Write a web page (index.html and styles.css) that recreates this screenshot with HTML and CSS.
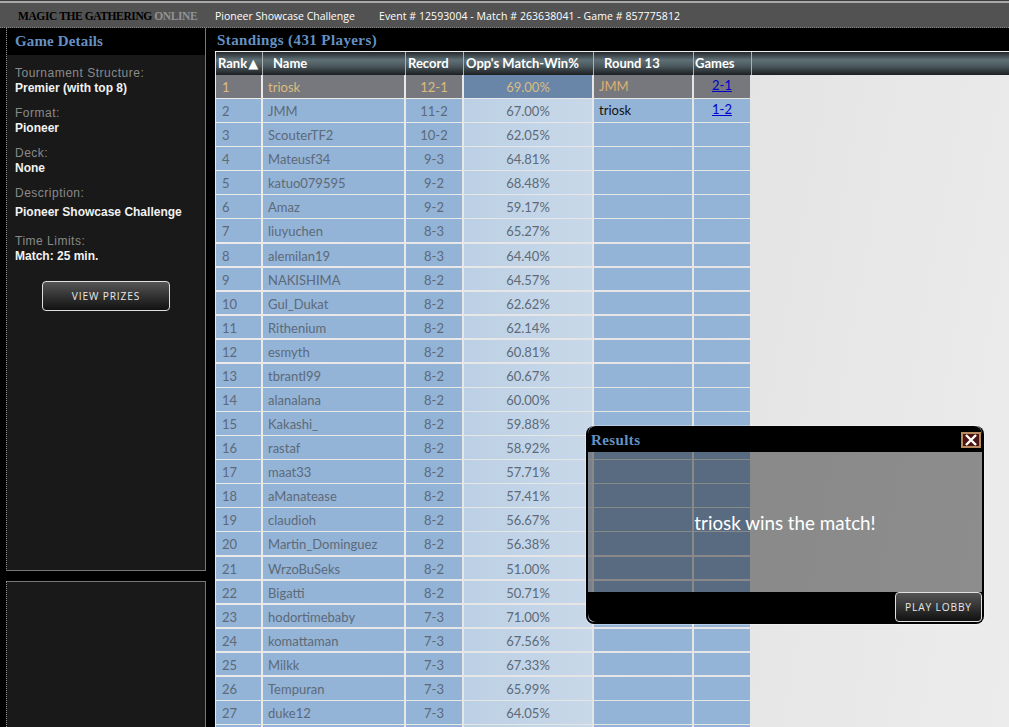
FILE: index.html
```html
<!DOCTYPE html>
<html>
<head>
<meta charset="utf-8">
<title>Pioneer Showcase Challenge</title>
<link rel="stylesheet" href="styles.css">
</head>
<body>
<div class="topbar">
  <div class="logo">MAGIC THE GATHERING <span class="logo-online">ONLINE</span></div>
  <div class="event-name">Pioneer Showcase Challenge</div>
  <div class="event-info">Event # 12593004 - Match # 263638041 - Game # 857775812</div>
</div>
<div class="main">
  <div class="sidebar">
    <div class="panel details">
      <h2 class="panel-title">Game Details</h2>
      <div class="detail"><div class="label">Tournament Structure:</div><div class="value">Premier (with top 8)</div></div>
      <div class="detail"><div class="label">Format:</div><div class="value">Pioneer</div></div>
      <div class="detail"><div class="label">Deck:</div><div class="value">None</div></div>
      <div class="detail detail-desc"><div class="label desc">Description:</div><div class="value">Pioneer Showcase Challenge</div></div>
      <div class="detail"><div class="label">Time Limits:</div><div class="value">Match: 25 min.</div></div>
      <button class="btn prizes">VIEW PRIZES</button>
    </div>
    <div class="panel chat"></div>
  </div>
  <div class="content">
    <h2 class="standings-title">Standings (431 Players)</h2>
    <div class="table-head">
      <div class="th c-rank">Rank<span class="arrow">▲</span></div>
      <div class="th c-name">Name</div>
      <div class="th c-rec">Record</div>
      <div class="th c-opp">Opp's Match-Win%</div>
      <div class="th c-round">Round 13</div>
      <div class="th c-games">Games</div>
    </div>
    <div class="rows" id="rows">
      <div class="row me"><div class="c-rank">1</div><div class="c-name">triosk</div><div class="c-rec">12-1</div><div class="c-opp">69.00%</div><div class="c-round">JMM</div><div class="c-games"><a href="#">2-1</a></div></div>
      <div class="row"><div class="c-rank">2</div><div class="c-name">JMM</div><div class="c-rec">11-2</div><div class="c-opp">67.00%</div><div class="c-round">triosk</div><div class="c-games"><a href="#">1-2</a></div></div>
      <div class="row"><div class="c-rank">3</div><div class="c-name">ScouterTF2</div><div class="c-rec">10-2</div><div class="c-opp">62.05%</div><div class="c-round"></div><div class="c-games"></div></div>
      <div class="row"><div class="c-rank">4</div><div class="c-name">Mateusf34</div><div class="c-rec">9-3</div><div class="c-opp">64.81%</div><div class="c-round"></div><div class="c-games"></div></div>
      <div class="row"><div class="c-rank">5</div><div class="c-name">katuo079595</div><div class="c-rec">9-2</div><div class="c-opp">68.48%</div><div class="c-round"></div><div class="c-games"></div></div>
      <div class="row"><div class="c-rank">6</div><div class="c-name">Amaz</div><div class="c-rec">9-2</div><div class="c-opp">59.17%</div><div class="c-round"></div><div class="c-games"></div></div>
      <div class="row"><div class="c-rank">7</div><div class="c-name">liuyuchen</div><div class="c-rec">8-3</div><div class="c-opp">65.27%</div><div class="c-round"></div><div class="c-games"></div></div>
      <div class="row"><div class="c-rank">8</div><div class="c-name">alemilan19</div><div class="c-rec">8-3</div><div class="c-opp">64.40%</div><div class="c-round"></div><div class="c-games"></div></div>
      <div class="row"><div class="c-rank">9</div><div class="c-name">NAKISHIMA</div><div class="c-rec">8-2</div><div class="c-opp">64.57%</div><div class="c-round"></div><div class="c-games"></div></div>
      <div class="row"><div class="c-rank">10</div><div class="c-name">Gul_Dukat</div><div class="c-rec">8-2</div><div class="c-opp">62.62%</div><div class="c-round"></div><div class="c-games"></div></div>
      <div class="row"><div class="c-rank">11</div><div class="c-name">Rithenium</div><div class="c-rec">8-2</div><div class="c-opp">62.14%</div><div class="c-round"></div><div class="c-games"></div></div>
      <div class="row"><div class="c-rank">12</div><div class="c-name">esmyth</div><div class="c-rec">8-2</div><div class="c-opp">60.81%</div><div class="c-round"></div><div class="c-games"></div></div>
      <div class="row"><div class="c-rank">13</div><div class="c-name">tbrantl99</div><div class="c-rec">8-2</div><div class="c-opp">60.67%</div><div class="c-round"></div><div class="c-games"></div></div>
      <div class="row"><div class="c-rank">14</div><div class="c-name">alanalana</div><div class="c-rec">8-2</div><div class="c-opp">60.00%</div><div class="c-round"></div><div class="c-games"></div></div>
      <div class="row"><div class="c-rank">15</div><div class="c-name">Kakashi_</div><div class="c-rec">8-2</div><div class="c-opp">59.88%</div><div class="c-round"></div><div class="c-games"></div></div>
      <div class="row"><div class="c-rank">16</div><div class="c-name">rastaf</div><div class="c-rec">8-2</div><div class="c-opp">58.92%</div><div class="c-round"></div><div class="c-games"></div></div>
      <div class="row"><div class="c-rank">17</div><div class="c-name">maat33</div><div class="c-rec">8-2</div><div class="c-opp">57.71%</div><div class="c-round"></div><div class="c-games"></div></div>
      <div class="row"><div class="c-rank">18</div><div class="c-name">aManatease</div><div class="c-rec">8-2</div><div class="c-opp">57.41%</div><div class="c-round"></div><div class="c-games"></div></div>
      <div class="row"><div class="c-rank">19</div><div class="c-name">claudioh</div><div class="c-rec">8-2</div><div class="c-opp">56.67%</div><div class="c-round"></div><div class="c-games"></div></div>
      <div class="row"><div class="c-rank">20</div><div class="c-name">Martin_Dominguez</div><div class="c-rec">8-2</div><div class="c-opp">56.38%</div><div class="c-round"></div><div class="c-games"></div></div>
      <div class="row"><div class="c-rank">21</div><div class="c-name">WrzoBuSeks</div><div class="c-rec">8-2</div><div class="c-opp">51.00%</div><div class="c-round"></div><div class="c-games"></div></div>
      <div class="row"><div class="c-rank">22</div><div class="c-name">Bigatti</div><div class="c-rec">8-2</div><div class="c-opp">50.71%</div><div class="c-round"></div><div class="c-games"></div></div>
      <div class="row"><div class="c-rank">23</div><div class="c-name">hodortimebaby</div><div class="c-rec">7-3</div><div class="c-opp">71.00%</div><div class="c-round"></div><div class="c-games"></div></div>
      <div class="row"><div class="c-rank">24</div><div class="c-name">komattaman</div><div class="c-rec">7-3</div><div class="c-opp">67.56%</div><div class="c-round"></div><div class="c-games"></div></div>
      <div class="row"><div class="c-rank">25</div><div class="c-name">Milkk</div><div class="c-rec">7-3</div><div class="c-opp">67.33%</div><div class="c-round"></div><div class="c-games"></div></div>
      <div class="row"><div class="c-rank">26</div><div class="c-name">Tempuran</div><div class="c-rec">7-3</div><div class="c-opp">65.99%</div><div class="c-round"></div><div class="c-games"></div></div>
      <div class="row"><div class="c-rank">27</div><div class="c-name">duke12</div><div class="c-rec">7-3</div><div class="c-opp">64.05%</div><div class="c-round"></div><div class="c-games"></div></div>
      <div class="row"><div class="c-rank"></div><div class="c-name"></div><div class="c-rec"></div><div class="c-opp"></div><div class="c-round"></div><div class="c-games"></div></div>
    </div>
  </div>
</div>

<div class="dialog">
  <div class="dialog-head">
    <span class="dialog-title">Results</span>
    <span class="dialog-close"><svg width="14" height="12" viewBox="0 0 14 12"><path d="M2 1 L12 11 M12 1 L2 11" stroke="#fff" stroke-width="2.4"/></svg></span>
  </div>
  <div class="dialog-body">triosk wins the match!</div>
  <div class="dialog-foot"><button class="btn lobby">PLAY LOBBY</button></div>
</div>
</body>
</html>
```

FILE: styles.css
```css
html, body { margin: 0; padding: 0; height: 727px; overflow: hidden; }
body { background: #000; font-family: "Liberation Sans", sans-serif; font-size: 12px; position: relative; }

.topbar {
  height: 22px;
  padding-top: 5px;
  display: flex;
  align-items: center;
  background: linear-gradient(#3c3c3c 1px, #a8a8a8 1px, #a8a8a8 3px, #525252 3px);
  border-bottom: 1px dotted #8a8a8a;
  color: #fff;
  font-family: "Open Sans", sans-serif;
  font-size: 10.5px;
}
.logo {
  margin-left: 18px;
  width: 197px;
  flex: none;
  font-family: "Liberation Serif", serif;
  font-weight: bold;
  font-size: 11.5px;
  letter-spacing: -0.4px;
  color: #000;
  white-space: nowrap;
}
.logo-online { color: #929292; }
.event-name { width: 164px; white-space: nowrap; }
.event-info { white-space: nowrap; letter-spacing: 0.07px; }

.main { display: flex; height: 699px; }

.sidebar { width: 200px; margin-left: 6px; flex: none; }
.panel {
  background: #191919;
  border-left: 1px dotted #8a8a8a;
  border-right: 1px solid #777;
  border-bottom: 1px solid #777;
  box-sizing: border-box;
}
.details { height: 543px; color: #fff; }
.chat { height: 146px; margin-top: 10px; border-top: 1px solid #777; border-bottom: none; }
.panel-title {
  margin: 0 0 11px;
  height: 27px;
  padding-left: 8px;
  background: #000;
  font: bold 15px/27px "Liberation Serif", serif;
  letter-spacing: 0.15px;
  color: #6491c4;
}
.detail { padding-left: 8px; margin-bottom: 10px; line-height: 15px; }
.detail-desc { margin-bottom: 14px; }
.label { color: #8a8a8a; letter-spacing: 0.5px; }
.label.desc { margin-bottom: 4px; }
.value { color: #f2f2f2; font-weight: bold; font-size: 12px; }

.btn {
  display: block;
  background: linear-gradient(#555, #111);
  color: #e8e8e8;
  border: 1px solid #e0e0e0;
  border-radius: 4px;
  font-family: "Open Sans", sans-serif;
  font-size: 10.2px;
  letter-spacing: 0.85px;
  padding: 0;
}
.prizes { width: 128px; height: 30px; margin: 17px 0 0 35px; }

.content {
  flex: 1;
  margin-left: 9px;
  background: #e8e8e8 linear-gradient(100deg, #ebebeb, #e4e4e4 60%, #ececec);
  min-width: 0;
  overflow: hidden;
}
.standings-title {
  margin: 0;
  height: 23px;
  padding-left: 2px;
  background: #000;
  font: bold 15px/24px "Liberation Serif", serif;
  letter-spacing: 0.4px;
  color: #6491c4;
  border-bottom: 1px solid #f0f0f0;
}
.table-head {
  display: flex;
  height: 23px;
  background: linear-gradient(#23282b, #5f7076 35%, #4c5a5f 60%, #1c1f21);
  font-family: "Lato", sans-serif;
  font-weight: bold;
  font-size: 13px;
  color: #fff;
}
.th { line-height: 23px; border-right: 1px solid #b0b0b0; box-sizing: border-box; padding-left: 2px; white-space: nowrap; }
.arrow { font-size: 13px; margin-left: 1px; font-family: "DejaVu Sans", sans-serif; }
.th.c-rank { width: 48px; border-left: 1px solid #e8e8e8; }
.th.c-name { width: 143px; padding-left: 10px; }
.th.c-rec { width: 58px; }
.th.c-opp { width: 130px; }
.th.c-round { width: 100px; padding-left: 10px; }
.th.c-games { width: 58px; padding-left: 1px; }

.rows { display: flex; flex-direction: column; padding-left: 1px; }
.row {
  display: flex;
  height: 24.08px;
  box-sizing: border-box;
  padding-bottom: 1.5px;
  font-family: "Lato", sans-serif;
  font-size: 13px;
  color: #5d6a78;
  flex: none;
}
.row > div { background: #93b3d7; line-height: 24px; box-sizing: border-box; margin-right: 2px; }
.row > .c-rank { width: 45px; padding-left: 6px; }
.row > .c-name { width: 141px; padding-left: 5px; }
.row > .c-rec { width: 56px; text-align: center; }
.row > .c-opp { width: 128px; text-align: center; background: linear-gradient(90deg, #bcd0e5, #c8d8e9); }
.row > .c-round { width: 98px; padding-left: 5px; color: #111; line-height: 23px; }
.row > .c-games { width: 56px; text-align: center; margin-right: 0; line-height: 21px; }
.c-games a { color: #0000cc; }

.row.me { color: #dcbc80; }
.row.me > div { background: #76787e; }
.row.me > .c-opp { background: #6985a8; }
.row.me > .c-round { color: #dcb070; }

.dialog {
  position: absolute;
  left: 586px;
  top: 426px;
  width: 398px;
  height: 198px;
  box-sizing: border-box;
  border-radius: 8px;
  border: 2px solid #000;
  border-top-width: 0;
  display: flex;
  flex-direction: column;
  box-shadow: 0 0 0 1px rgba(255, 255, 255, 0.35);
}
.dialog-head {
  height: 26px;
  background: #000;
  border-radius: 8px 8px 0 0;
  display: flex;
  justify-content: space-between;
  align-items: center;
  padding: 2px 1px 0 3px;
  box-sizing: border-box;
}
.dialog-title { font: bold 15px "Liberation Serif", serif; letter-spacing: 0.4px; color: #6491c4; }
.dialog-close {
  width: 20px;
  height: 16px;
  display: flex;
  align-items: center;
  justify-content: center;
  box-sizing: border-box;
  border: 2px solid #b98a5e;
  background: #4a1512;
}
.dialog-close svg { flex: none; }
.dialog-body {
  height: 140px;
  background: rgba(0, 0, 0, 0.4);
  color: #fff;
  font-family: "Lato", sans-serif;
  font-size: 18.8px;
  display: flex;
  align-items: center;
  justify-content: center;
}
.dialog-foot {
  flex: 1;
  background: #000;
  border-radius: 0 0 8px 8px;
  display: flex;
  justify-content: flex-end;
  align-items: flex-start;
}
.lobby { width: 87px; height: 30px; }
```
